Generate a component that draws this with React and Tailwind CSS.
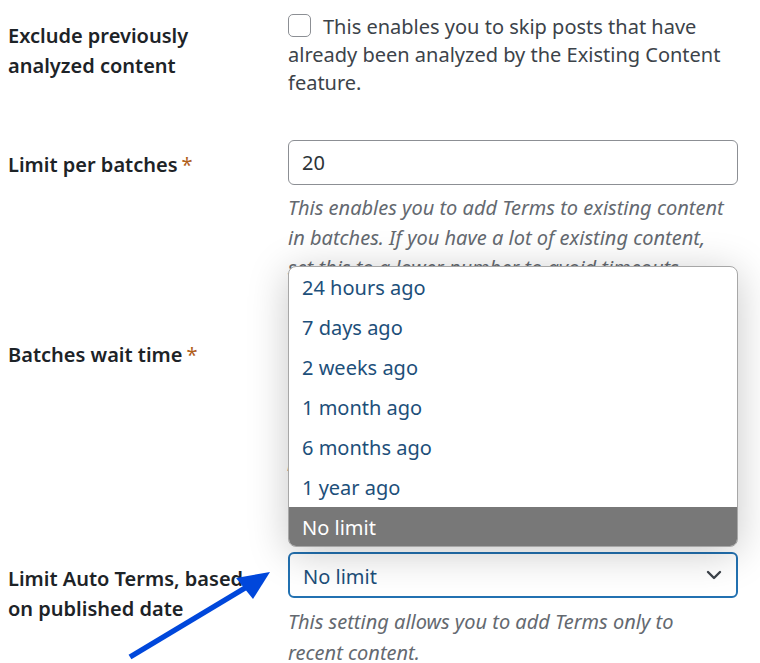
import React from "react";

const options = ["24 hours ago", "7 days ago", "2 weeks ago", "1 month ago", "6 months ago", "1 year ago", "No limit"];

const Req = () => <span className="ml-1 font-normal text-[#b0601a]">*</span>;

const App = () => {
  return (
    <div className="relative w-[760px] h-[663px] overflow-hidden bg-white text-[#1d2327] font-['Noto_Sans',sans-serif]">
      <div className="pl-2">
        {/* exclude analyzed */}
        <div className="grid grid-cols-[280px_450px] pt-3">
          <div className="pt-[9px] text-[20px] leading-[30px] font-semibold">
            Exclude previously
            <br />
            analyzed content
          </div>
          <div className="pt-[1px] text-[20px] leading-[28px] text-[#3c434a]">
            <span className="inline-block w-[23px] h-[23px] mr-3 align-[-3px] rounded-[5px] border border-[#8c8f94] bg-white"></span>
            This enables you to skip posts that have
            <br />
            already been analyzed by the Existing Content
            <br />
            feature.
          </div>
        </div>

        {/* limit per batches */}
        <div className="grid grid-cols-[280px_450px] mt-[43px]">
          <div className="pt-[10px] text-[20px] leading-[30px] font-semibold">
            Limit per batches<Req />
          </div>
          <div>
            <div className="h-[45px] rounded-[6px] border border-[#8c8f94] px-[13px] flex items-center text-[20px] text-[#2c3338]">20</div>
            <p className="mt-[8px] text-[20px] leading-[30px] italic text-[#646970] whitespace-nowrap">
              This enables you to add Terms to existing content
              <br />
              in batches. If you have a lot of existing content,
              <br />
              set this to a lower number to avoid timeouts.
            </p>
          </div>
        </div>

        {/* batches wait */}
        <div className="grid grid-cols-[280px_450px] mt-[48px]">
          <div className="pt-[9px] text-[20px] leading-[30px] font-semibold">
            Batches wait time<Req />
          </div>
          <div>
            <div className="h-[45px] rounded-[6px] border border-[#8c8f94] px-[13px] flex items-center text-[20px] text-[#2c3338]">10</div>
            <p className="mt-[38px] text-[20px] leading-[30px] italic text-[#646970]">
              This is the wait time (in seconds) between processing batches of Auto Terms for existing content.
            </p>
          </div>
        </div>

        {/* limit auto terms */}
        <div className="grid grid-cols-[280px_450px] mt-[48px]">
          <div className="pt-[12px] text-[20px] leading-[30px] font-semibold">
            Limit Auto Terms, based
            <br />
            on published date
          </div>
          <div>
            <div className="h-[46px] rounded-[6px] border-2 border-[#2271b1] pl-[13px] pr-[14px] flex items-center justify-between text-[20px] text-[#1d4f7a]">
              <span className="pt-[3px]">No limit</span>
              <svg width="16" height="10" viewBox="0 0 16 10" fill="none" stroke="#3c434a" strokeWidth="2.4" strokeLinecap="round" strokeLinejoin="round">
                <path d="M2 2l6 6 6-6" />
              </svg>
            </div>
            <p className="mt-[8px] text-[20px] leading-[31px] italic text-[#646970] whitespace-nowrap">
              This setting allows you to add Terms only to
              <br />
              recent content.
            </p>
          </div>
        </div>
      </div>

      {/* open select list */}
      <div className="absolute z-10 left-[288px] top-[266px] w-[450px] h-[281px] overflow-hidden rounded-[8px] border border-[#a7a7a7] bg-white shadow-[0_6px_40px_rgba(0,0,0,0.22)]">
        {options.map((o) => (
          <div
            key={o}
            className={`h-[40px] px-[13px] pt-[2px] flex items-center text-[20px] ${o === "No limit" ? "bg-[#787878] text-white" : "text-[#1d4f7a]"}`}
          >
            {o}
          </div>
        ))}
      </div>

      {/* annotation arrow */}
      <svg className="absolute z-20 left-0 top-0" width="760" height="663" viewBox="0 0 760 663">
        <line x1="130" y1="657" x2="250" y2="585" stroke="#0047db" strokeWidth="5.5" />
        <polygon points="270,572 236,578 253,599" fill="#0047db" />
      </svg>
    </div>
  );
};

export default App;
